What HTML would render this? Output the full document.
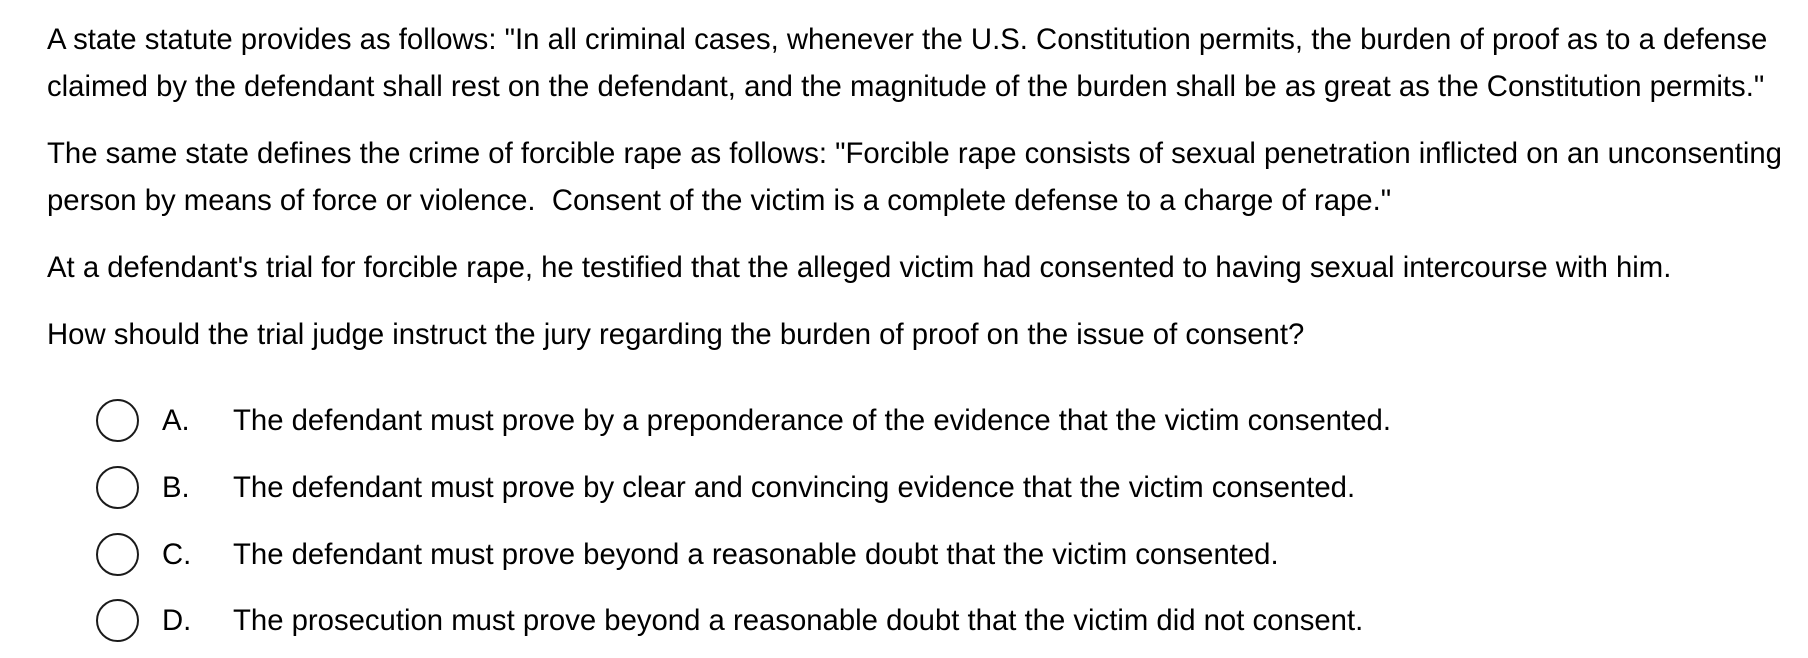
<!DOCTYPE html>
<html><head><meta charset="utf-8"><style>
html,body{margin:0;padding:0;background:#fff;width:1808px;height:658px;overflow:hidden}
body{position:relative;font-family:"Liberation Sans",Arial,sans-serif;font-size:29.3px;color:#000}
.l{position:absolute;white-space:pre;line-height:34px;left:47px}
.c{position:absolute;left:96px;width:39px;height:39px;border:2px solid #1a1a1a;border-radius:50%;box-sizing:content-box}
.k{position:absolute;left:162px;white-space:pre;line-height:34px}
.t{position:absolute;left:233px;white-space:pre;line-height:34px}
</style></head><body>
<div class="l" style="top:23px">A state statute provides as follows: "In all criminal cases, whenever the U.S. Constitution permits, the burden of proof as to a defense</div>
<div class="l" style="top:70px">claimed by the defendant shall rest on the defendant, and the magnitude of the burden shall be as great as the Constitution permits."</div>
<div class="l" style="top:137px">The same state defines the crime of forcible rape as follows: "Forcible rape consists of sexual penetration inflicted on an unconsenting</div>
<div class="l" style="top:184px">person by means of force or violence.  Consent of the victim is a complete defense to a charge of rape."</div>
<div class="l" style="top:251px">At a defendant's trial for forcible rape, he testified that the alleged victim had consented to having sexual intercourse with him.</div>
<div class="l" style="top:318px">How should the trial judge instruct the jury regarding the burden of proof on the issue of consent?</div>

<div class="c" style="top:399px"></div><div class="k" style="top:404px">A.</div><div class="t" style="top:404px">The defendant must prove by a preponderance of the evidence that the victim consented.</div>
<div class="c" style="top:466px"></div><div class="k" style="top:471px">B.</div><div class="t" style="top:471px">The defendant must prove by clear and convincing evidence that the victim consented.</div>
<div class="c" style="top:533px"></div><div class="k" style="top:538px">C.</div><div class="t" style="top:538px">The defendant must prove beyond a reasonable doubt that the victim consented.</div>
<div class="c" style="top:599px"></div><div class="k" style="top:604px">D.</div><div class="t" style="top:604px">The prosecution must prove beyond a reasonable doubt that the victim did not consent.</div>
</body></html>
